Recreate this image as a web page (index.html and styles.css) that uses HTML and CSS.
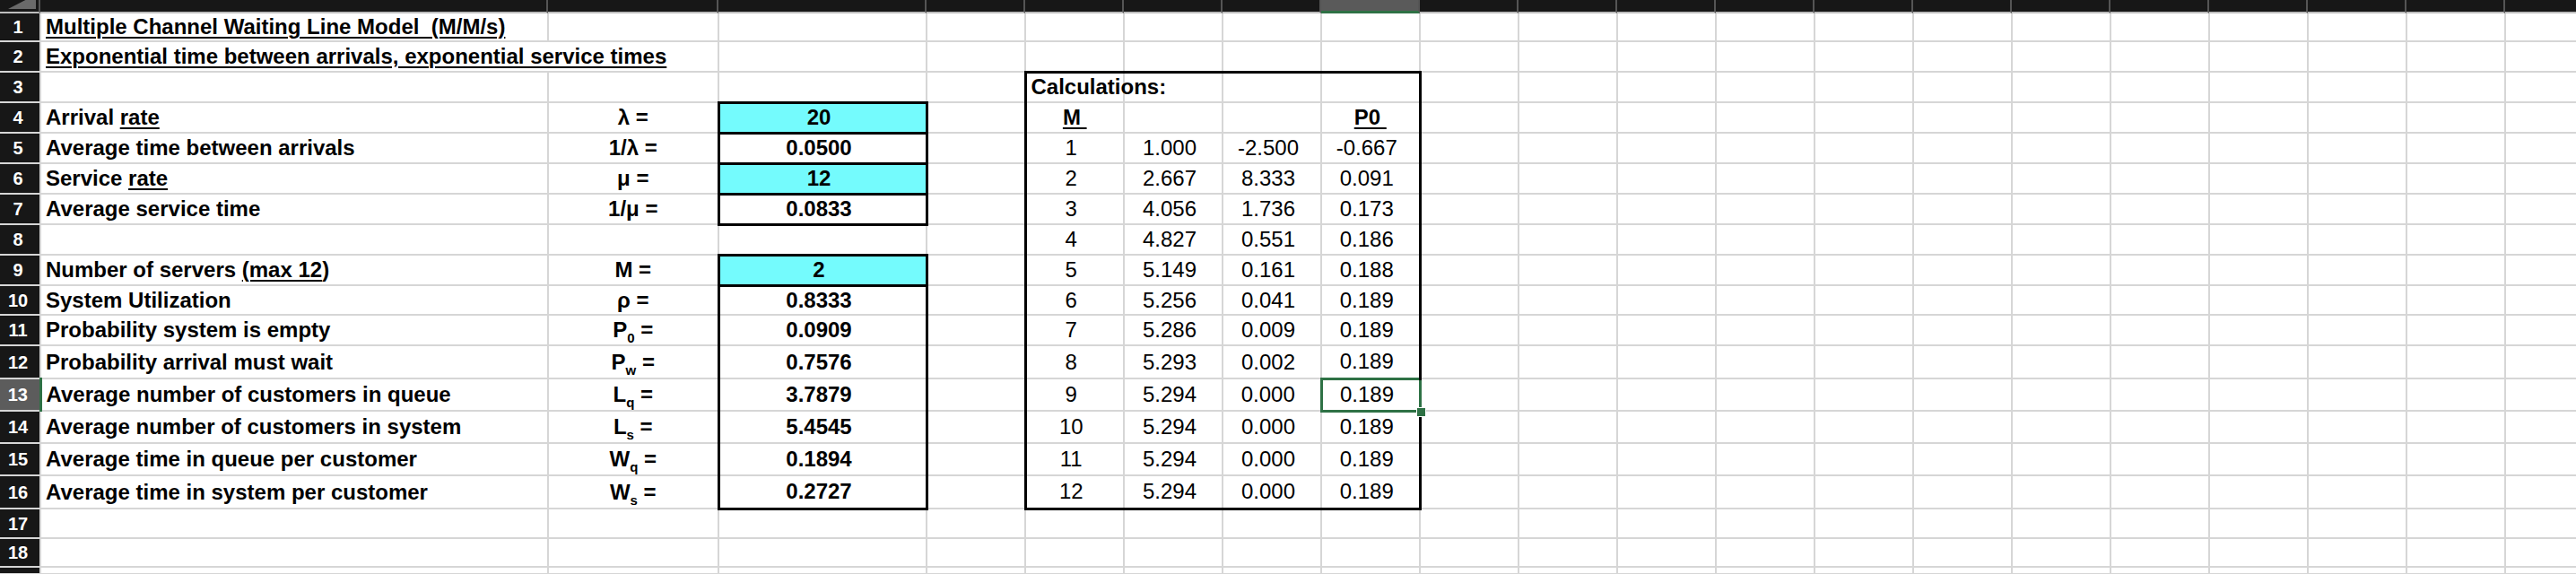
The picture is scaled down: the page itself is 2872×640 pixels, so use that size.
FILE: index.html
```html
<!DOCTYPE html>
<html>
<head>
<meta charset="utf-8">
<title>Multiple Channel Waiting Line Model</title>
<link rel="stylesheet" href="styles.css">
</head>
<body>
<div class="colhead">
  <div class="ch corner"><svg class="tri" width="43" height="13" viewBox="0 0 43 13"><polygon points="40,-6 40,10 9,10" fill="#6a6a6a"/></svg></div>
  <div class="ch wa"></div><div class="ch wb"></div><div class="ch wc"></div>
  <div class="ch"></div><div class="ch"></div><div class="ch"></div><div class="ch"></div><div class="ch cur"></div>
  <div class="ch"></div><div class="ch"></div><div class="ch"></div><div class="ch"></div><div class="ch"></div><div class="ch"></div>
  <div class="ch"></div><div class="ch"></div><div class="ch"></div><div class="ch"></div><div class="ch"></div><div class="ch"></div>
</div>
<table class="sheet">
  <colgroup>
    <col class="k-rh"><col class="k-a"><col class="k-b"><col class="k-c">
    <col class="k-n"><col class="k-n"><col class="k-n"><col class="k-n"><col class="k-n">
    <col class="k-n"><col class="k-n"><col class="k-n"><col class="k-n"><col class="k-n"><col class="k-n">
    <col class="k-n"><col class="k-n"><col class="k-n"><col class="k-n"><col class="k-n"><col class="k-n">
  </colgroup>
  <tr class="r1"><td class="rh">1</td><td class="lbl"><u>Multiple Channel Waiting Line Model&nbsp; (M/M/s)</u></td><td></td><td></td><td></td><td></td><td></td><td></td><td></td><td></td><td></td><td></td><td></td><td></td><td></td><td></td><td></td><td></td><td></td><td></td><td></td></tr>
  <tr><td class="rh">2</td><td class="lbl spill"><u>Exponential time between arrivals, exponential service times</u></td><td></td><td></td><td></td><td></td><td></td><td></td><td></td><td></td><td></td><td></td><td></td><td></td><td></td><td></td><td></td><td></td><td></td><td></td><td></td></tr>
  <tr><td class="rh">3</td><td></td><td></td><td></td><td></td><td class="lbl bt bl">Calculations:</td><td class="bt"></td><td class="bt"></td><td class="bt br"></td><td></td><td></td><td></td><td></td><td></td><td></td><td></td><td></td><td></td><td></td><td></td><td></td></tr>
  <tr><td class="rh">4</td><td class="lbl">Arrival <u>rate</u></td><td class="sym">λ =</td><td class="val in bt bb bl br">20</td><td></td><td class="hd bl"><u>M&nbsp;</u></td><td></td><td></td><td class="hd br"><u>P0&nbsp;</u></td><td></td><td></td><td></td><td></td><td></td><td></td><td></td><td></td><td></td><td></td><td></td><td></td></tr>
  <tr><td class="rh">5</td><td class="lbl">Average time between arrivals</td><td class="sym">1/λ =</td><td class="val bt bb bl br">0.0500</td><td></td><td class="num bl">1</td><td class="num">1.000</td><td class="num">-2.500</td><td class="num br">-0.667</td><td></td><td></td><td></td><td></td><td></td><td></td><td></td><td></td><td></td><td></td><td></td><td></td></tr>
  <tr><td class="rh">6</td><td class="lbl">Service <u>rate</u></td><td class="sym">μ =</td><td class="val in bt bb bl br">12</td><td></td><td class="num bl">2</td><td class="num">2.667</td><td class="num">8.333</td><td class="num br">0.091</td><td></td><td></td><td></td><td></td><td></td><td></td><td></td><td></td><td></td><td></td><td></td><td></td></tr>
  <tr><td class="rh">7</td><td class="lbl">Average service time</td><td class="sym">1/μ =</td><td class="val bt bb bl br">0.0833</td><td></td><td class="num bl">3</td><td class="num">4.056</td><td class="num">1.736</td><td class="num br">0.173</td><td></td><td></td><td></td><td></td><td></td><td></td><td></td><td></td><td></td><td></td><td></td><td></td></tr>
  <tr><td class="rh">8</td><td></td><td></td><td></td><td></td><td class="num bl">4</td><td class="num">4.827</td><td class="num">0.551</td><td class="num br">0.186</td><td></td><td></td><td></td><td></td><td></td><td></td><td></td><td></td><td></td><td></td><td></td><td></td></tr>
  <tr><td class="rh">9</td><td class="lbl">Number of servers <u>(max 12</u>)</td><td class="sym">M =</td><td class="val in bt bb bl br">2</td><td></td><td class="num bl">5</td><td class="num">5.149</td><td class="num">0.161</td><td class="num br">0.188</td><td></td><td></td><td></td><td></td><td></td><td></td><td></td><td></td><td></td><td></td><td></td><td></td></tr>
  <tr class="r10"><td class="rh">10</td><td class="lbl">System Utilization</td><td class="sym">ρ =</td><td class="val bl br">0.8333</td><td></td><td class="num bl">6</td><td class="num">5.256</td><td class="num">0.041</td><td class="num br">0.189</td><td></td><td></td><td></td><td></td><td></td><td></td><td></td><td></td><td></td><td></td><td></td><td></td></tr>
  <tr><td class="rh">11</td><td class="lbl">Probability system is empty</td><td class="sym">P<span class="sub">0</span> =</td><td class="val bl br">0.0909</td><td></td><td class="num bl">7</td><td class="num">5.286</td><td class="num">0.009</td><td class="num br">0.189</td><td></td><td></td><td></td><td></td><td></td><td></td><td></td><td></td><td></td><td></td><td></td><td></td></tr>
  <tr class="r12"><td class="rh">12</td><td class="lbl">Probability arrival must wait</td><td class="sym">P<span class="sub">w</span> =</td><td class="val bl br">0.7576</td><td></td><td class="num bl">8</td><td class="num">5.293</td><td class="num">0.002</td><td class="num br">0.189</td><td></td><td></td><td></td><td></td><td></td><td></td><td></td><td></td><td></td><td></td><td></td><td></td></tr>
  <tr class="r13"><td class="rh cur">13</td><td class="lbl">Average number of customers in queue</td><td class="sym">L<span class="sub">q</span> =</td><td class="val bl br">3.7879</td><td></td><td class="num bl">9</td><td class="num">5.294</td><td class="num">0.000</td><td class="num br sel">0.189<span class="handle"></span></td><td></td><td></td><td></td><td></td><td></td><td></td><td></td><td></td><td></td><td></td><td></td><td></td></tr>
  <tr class="r13"><td class="rh">14</td><td class="lbl">Average number of customers in system</td><td class="sym">L<span class="sub">s</span> =</td><td class="val bl br">5.4545</td><td></td><td class="num bl">10</td><td class="num">5.294</td><td class="num">0.000</td><td class="num br">0.189</td><td></td><td></td><td></td><td></td><td></td><td></td><td></td><td></td><td></td><td></td><td></td><td></td></tr>
  <tr class="r13"><td class="rh">15</td><td class="lbl">Average time in queue per customer</td><td class="sym">W<span class="sub">q</span> =</td><td class="val bl br">0.1894</td><td></td><td class="num bl">11</td><td class="num">5.294</td><td class="num">0.000</td><td class="num br">0.189</td><td></td><td></td><td></td><td></td><td></td><td></td><td></td><td></td><td></td><td></td><td></td><td></td></tr>
  <tr class="r16"><td class="rh">16</td><td class="lbl">Average time in system per customer</td><td class="sym">W<span class="sub">s</span> =</td><td class="val bl br bb">0.2727</td><td></td><td class="num bl bb">12</td><td class="num bb">5.294</td><td class="num bb">0.000</td><td class="num br bb">0.189</td><td></td><td></td><td></td><td></td><td></td><td></td><td></td><td></td><td></td><td></td><td></td><td></td></tr>
  <tr class="r17"><td class="rh">17</td><td></td><td></td><td></td><td></td><td></td><td></td><td></td><td></td><td></td><td></td><td></td><td></td><td></td><td></td><td></td><td></td><td></td><td></td><td></td><td></td></tr>
  <tr class="r18"><td class="rh">18</td><td></td><td></td><td></td><td></td><td></td><td></td><td></td><td></td><td></td><td></td><td></td><td></td><td></td><td></td><td></td><td></td><td></td><td></td><td></td><td></td></tr>
  <tr class="r19"><td class="rh"></td><td></td><td></td><td></td><td></td><td></td><td></td><td></td><td></td><td></td><td></td><td></td><td></td><td></td><td></td><td></td><td></td><td></td><td></td><td></td><td></td></tr>
</table>
</body>
</html>
```
FILE: styles.css
```css
html, body {
  margin: 0;
  padding: 0;
  background: #ffffff;
}
body {
  width: 2872px;
  height: 640px;
  overflow: hidden;
  font-family: "Liberation Sans", Arial, sans-serif;
  color: #000;
}

/* column header strip */
.colhead {
  display: flex;
  height: 15px;
  width: 2903px;
  background: #171717;
}
.ch {
  flex: 0 0 110px;
  box-sizing: border-box;
  height: 15px;
  border-right: 2px solid #555555;
  border-bottom: 2px solid #bdbdbd;
}
.ch.corner { flex-basis: 45px; overflow: hidden; }
.ch.wa { flex-basis: 566px; }
.ch.wb { flex-basis: 190px; }
.ch.wc { flex-basis: 232px; }
.ch.cur {
  background: #5a5a5a;
  border-bottom: 3px solid #2e7145;
}
.tri { display: block; }

/* sheet grid */
.sheet {
  border-collapse: collapse;
  table-layout: fixed;
  width: 2903px;
}
.k-rh { width: 45px; }
.k-a { width: 566px; }
.k-b { width: 190px; }
.k-c { width: 232px; }
.k-n { width: 110px; }

.sheet tr { height: 34px; }
.sheet tr.r1 { height: 31px; }
.sheet tr.r10 { height: 33px; }
.sheet tr.r12 { height: 37px; }
.sheet tr.r13 { height: 36px; }
.sheet tr.r16 { height: 37px; }
.sheet tr.r17 { height: 33px; }
.sheet tr.r18 { height: 32px; }
.sheet tr.r19 { height: 8px; }

.sheet td {
  border: 0;
  border-right: 2px solid #d6d6d6;
  border-bottom: 2px solid #d6d6d6;
  padding: 0 5px;
  white-space: nowrap;
  overflow: visible;
  font-size: 24px;
  line-height: 26px;
  vertical-align: middle;
  background: #ffffff;
}
.sheet tr.r19 td { line-height: 4px; font-size: 4px; }

.sheet td.rh {
  background: #171717;
  color: #ffffff;
  font-weight: bold;
  font-size: 20px;
  text-align: center;
  padding: 0 4px 0 0;
}
.sheet td.rh.cur {
  background: #5c5c5c;
  border-right: 3px solid #2e7145;
}

.lbl { font-weight: bold; text-align: left; }
.sym { font-weight: bold; text-align: center; }
.val { font-weight: bold; text-align: center; }
.sheet td.val { padding: 0 13px 0 5px; }
.hd { font-weight: bold; text-align: center; }
.num { font-weight: normal; text-align: center; }
.sheet td.num { padding: 0 13px 0 5px; }

u {
  text-decoration: underline;
  text-decoration-thickness: 2px;
  text-underline-offset: 3px;
}

.sub {
  font-size: 15px;
  line-height: 0;
  vertical-align: -6px;
}

.sheet td.in { background: #74fbfd; }

.sheet td.spill { border-right-style: hidden; }

/* thick box borders */
.sheet td.bt { border-top: 3px solid #000; }
.sheet td.bb { border-bottom: 3px solid #000; }
.sheet td.bl { border-left: 3px solid #000; }
.sheet td.br { border-right: 3px solid #000; }

/* active cell */
.sheet td.sel {
  position: relative;
  border: 3px solid #2e7145;
}
.handle {
  position: absolute;
  right: -8px;
  bottom: -8px;
  width: 9px;
  height: 9px;
  background: #2e7145;
  border: 1px solid #ffffff;
}
```
